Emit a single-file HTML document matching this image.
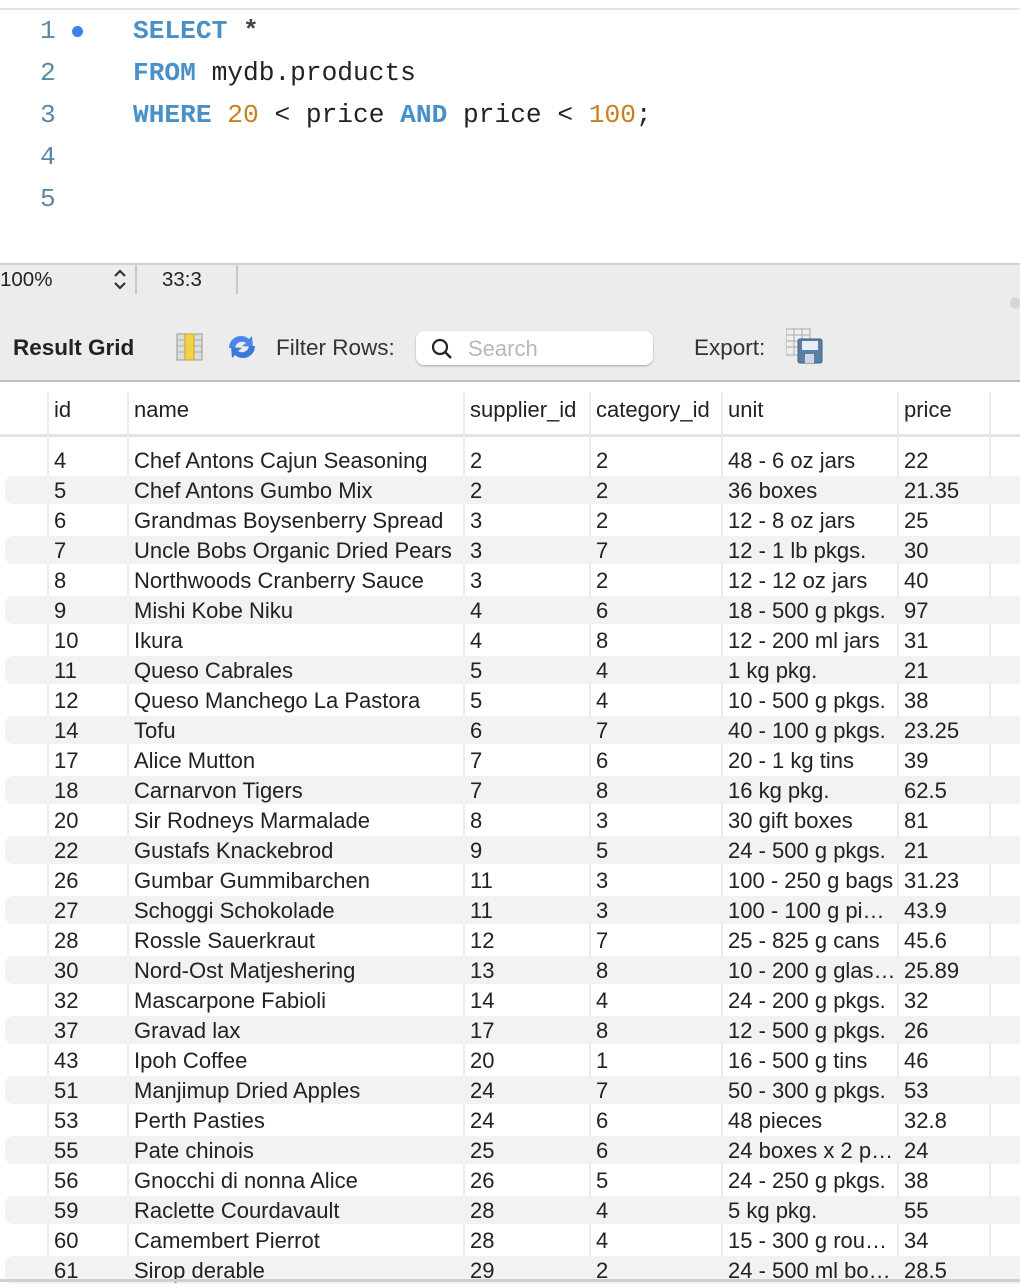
<!DOCTYPE html>
<html><head><meta charset="utf-8"><style>
*{margin:0;padding:0;box-sizing:border-box}
body{width:1020px;height:1282px;overflow:hidden;background:#fff;position:relative;font-family:"Liberation Sans",Arial,sans-serif;color:#222}
.abs{position:absolute}
.code{font-family:"Liberation Mono","DejaVu Sans Mono",monospace;font-size:26.2px;white-space:pre}
.ln{color:#5a88a6;left:40px}
.kw{color:#4a90c8;font-weight:bold}
.num{color:#c87f1e}
.grid{position:absolute;left:0;top:380px;width:1020px;height:902px;background:#fff}
.vl{position:absolute;top:392px;width:2px;height:890px;background:#ebebeb}
.row{position:absolute;left:0;width:1020px;height:30px;font-size:22px;line-height:30px}
.row.g .bg{position:absolute;left:5px;right:0;top:1px;bottom:1px;background:#f2f2f2;border-radius:8px 0 0 8px}
.row span{position:absolute;top:1px;white-space:nowrap}
.h{position:absolute;top:396px;font-size:22px;line-height:28px}
</style></head><body>
<div class="abs" style="left:0;top:8px;width:1020px;height:2px;background:#e6e6e6"></div>
<div class="abs code ln" style="top:16px">1</div>
<div class="abs" style="left:72px;top:26px;width:11px;height:11px;border-radius:50%;background:#3b82f0"></div>
<div class="abs code" style="left:133px;top:16px"><span class="kw">SELECT</span> <span style="color:#444;font-weight:bold">*</span></div>
<div class="abs code ln" style="top:58px">2</div>
<div class="abs code" style="left:133px;top:58px"><span class="kw">FROM</span> mydb.products</div>
<div class="abs code ln" style="top:100px">3</div>
<div class="abs code" style="left:133px;top:100px"><span class="kw">WHERE</span> <span class="num">20</span> &lt; price <span class="kw">AND</span> price &lt; <span class="num">100</span>;</div>
<div class="abs code ln" style="top:142px">4</div>
<div class="abs code ln" style="top:184px">5</div>

<div class="abs" style="left:0;top:263px;width:1020px;height:117px;background:#ececec;border-top:2px solid #d2d2d2"></div>
<div class="abs" style="left:0;top:268px;font-size:20.5px">100%</div>
<svg class="abs" style="left:112px;top:267px" width="16" height="26" viewBox="0 0 16 26"><path d="M3 9l5-5 5 5M3 16l5 5 5-5" fill="none" stroke="#333" stroke-width="2.2"/></svg>
<div class="abs" style="left:135px;top:265px;width:2px;height:29px;background:#c8c8c8"></div>
<div class="abs" style="left:162px;top:268px;font-size:20.5px">33:3</div>
<div class="abs" style="left:236px;top:265px;width:2px;height:29px;background:#c8c8c8"></div>
<div class="abs" style="left:1010px;top:297px;width:10px;height:12px;border-radius:5px;background:#d6d6d6"></div>

<div class="abs" style="left:13px;top:335px;font-size:22.5px;font-weight:bold;color:#222">Result Grid</div>
<svg class="abs" style="left:176px;top:333px" width="27" height="28" viewBox="0 0 27 28"><rect x="1" y="1" width="25" height="26" fill="#ddd" stroke="#999"/><path d="M1 7h25M1 13h25M1 19h25" stroke="#aaa"/><rect x="9" y="1" width="9" height="26" fill="#f3d24a" stroke="#c9a220"/></svg>
<svg class="abs" style="left:225px;top:332px" width="34" height="30" viewBox="0 0 34 30"><path d="M4 16a12 12 0 0 1 20-9l3-3 1 11-11-1 4-3a7 7 0 0 0-11 5z" fill="#4a86e8"/><path d="M30 14a12 12 0 0 1-20 9l-3 3-1-11 11 1-4 3a7 7 0 0 0 11-5z" fill="#3c78d8"/></svg>
<div class="abs" style="left:276px;top:335px;font-size:22.5px;color:#333">Filter Rows:</div>
<div class="abs" style="left:416px;top:331px;width:237px;height:34px;background:#fff;border-radius:8px;box-shadow:0 1px 2px rgba(0,0,0,.3)"></div>
<svg class="abs" style="left:430px;top:337px" width="24" height="24" viewBox="0 0 24 24"><circle cx="10" cy="10" r="7" fill="none" stroke="#222" stroke-width="2.2"/><path d="M15 15l6 6" stroke="#222" stroke-width="2.4"/></svg>
<div class="abs" style="left:468px;top:336px;font-size:22px;color:#b8b8b8">Search</div>
<div class="abs" style="left:694px;top:335px;font-size:22.5px;color:#333">Export:</div>
<svg class="abs" style="left:786px;top:328px" width="38" height="36" viewBox="0 0 38 36"><rect x="0" y="1" width="24" height="26" fill="#eee" stroke="#aaa"/><path d="M0 7h24M0 13h24M0 19h24M8 1v26M16 1v26" stroke="#aaa"/><rect x="12" y="11" width="24" height="24" rx="2" fill="#5a7fa6" stroke="#3e5f82"/><rect x="16" y="13" width="16" height="9" fill="#e8eef4"/><rect x="19" y="26" width="9" height="9" fill="#cfd8e2"/></svg>

<div class="grid" style="border-top:2px solid #bdbdbd"></div>
<div class="abs" style="left:0;top:434px;width:1020px;height:3px;background:#e4e4e4"></div>
<div class="vl" style="left:47px"></div><div class="vl" style="left:127px"></div><div class="vl" style="left:463px"></div><div class="vl" style="left:589px"></div><div class="vl" style="left:721px"></div><div class="vl" style="left:897px"></div><div class="vl" style="left:989px"></div>
<div class="h" style="left:54px">id</div><div class="h" style="left:134px">name</div><div class="h" style="left:470px">supplier_id</div><div class="h" style="left:596px">category_id</div><div class="h" style="left:728px">unit</div><div class="h" style="left:904px">price</div>
<div id="rows"></div>
<div class="abs" style="left:0;top:1279px;width:1020px;height:3px;background:#d0d0d0"></div>
<script>
var d=[[4,"Chef Antons Cajun Seasoning",2,2,"48 - 6 oz jars","22"],[5,"Chef Antons Gumbo Mix",2,2,"36 boxes","21.35"],[6,"Grandmas Boysenberry Spread",3,2,"12 - 8 oz jars","25"],[7,"Uncle Bobs Organic Dried Pears",3,7,"12 - 1 lb pkgs.","30"],[8,"Northwoods Cranberry Sauce",3,2,"12 - 12 oz jars","40"],[9,"Mishi Kobe Niku",4,6,"18 - 500 g pkgs.","97"],[10,"Ikura",4,8,"12 - 200 ml jars","31"],[11,"Queso Cabrales",5,4,"1 kg pkg.","21"],[12,"Queso Manchego La Pastora",5,4,"10 - 500 g pkgs.","38"],[14,"Tofu",6,7,"40 - 100 g pkgs.","23.25"],[17,"Alice Mutton",7,6,"20 - 1 kg tins","39"],[18,"Carnarvon Tigers",7,8,"16 kg pkg.","62.5"],[20,"Sir Rodneys Marmalade",8,3,"30 gift boxes","81"],[22,"Gustafs Knackebrod",9,5,"24 - 500 g pkgs.","21"],[26,"Gumbar Gummibarchen",11,3,"100 - 250 g bags","31.23"],[27,"Schoggi Schokolade",11,3,"100 - 100 g pi\u2026","43.9"],[28,"Rossle Sauerkraut",12,7,"25 - 825 g cans","45.6"],[30,"Nord-Ost Matjeshering",13,8,"10 - 200 g glas\u2026","25.89"],[32,"Mascarpone Fabioli",14,4,"24 - 200 g pkgs.","32"],[37,"Gravad lax",17,8,"12 - 500 g pkgs.","26"],[43,"Ipoh Coffee",20,1,"16 - 500 g tins","46"],[51,"Manjimup Dried Apples",24,7,"50 - 300 g pkgs.","53"],[53,"Perth Pasties",24,6,"48 pieces","32.8"],[55,"Pate chinois",25,6,"24 boxes x 2 p\u2026","24"],[56,"Gnocchi di nonna Alice",26,5,"24 - 250 g pkgs.","38"],[59,"Raclette Courdavault",28,4,"5 kg pkg.","55"],[60,"Camembert Pierrot",28,4,"15 - 300 g rou\u2026","34"],[61,"Sirop derable",29,2,"24 - 500 ml bo\u2026","28.5"]];
var x=[54,134,470,596,728,904],h="";
d.forEach(function(r,i){h+='<div class="row'+(i%2?' g':'')+'" style="top:'+(445+i*30)+'px">'+(i%2?'<div class="bg"></div>':'');r.forEach(function(c,j){h+='<span style="left:'+x[j]+'px">'+c+'</span>'});h+='</div>'});
document.getElementById('rows').innerHTML=h;
</script>
</body></html>
